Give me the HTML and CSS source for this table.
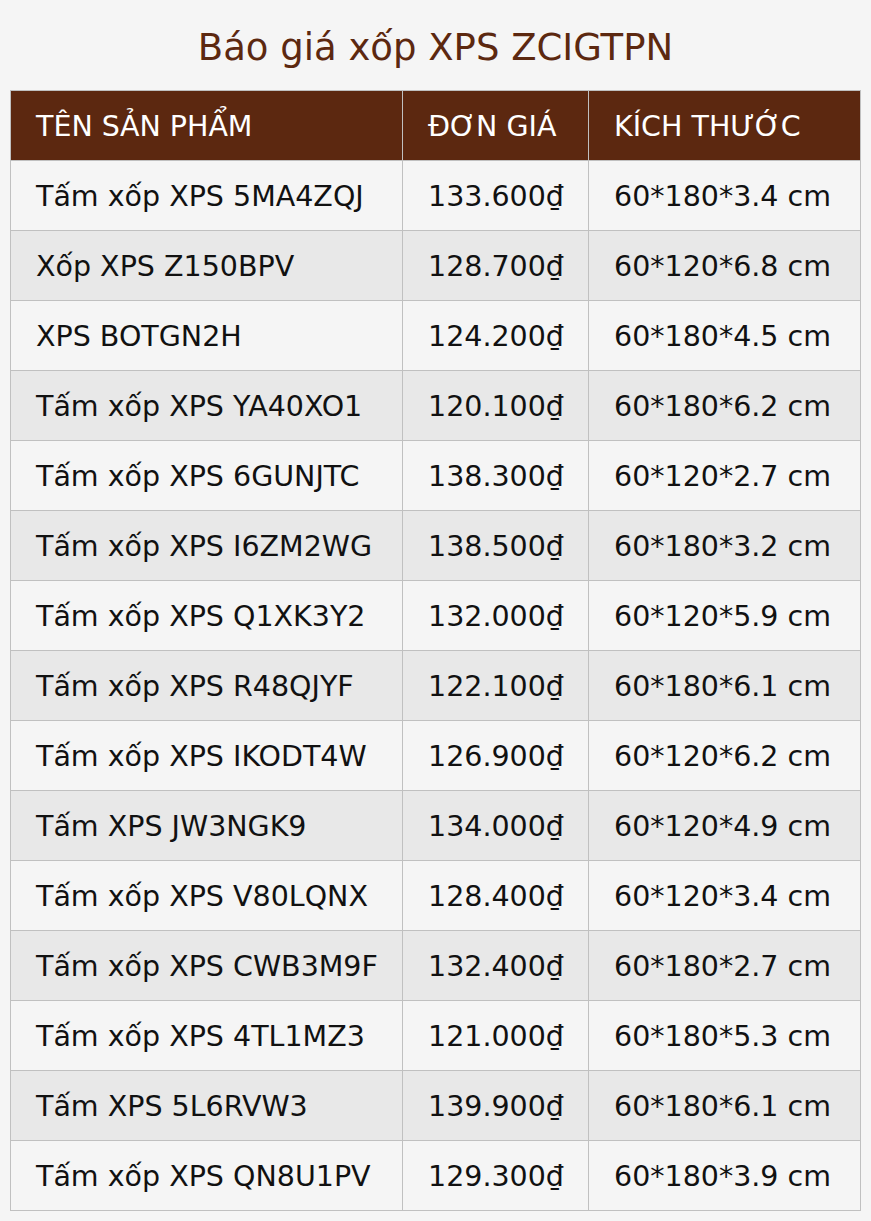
FILE: index.html
```html
<!DOCTYPE html>
<html lang="vi">
<head>
<meta charset="utf-8">
<title>Báo giá xốp XPS ZCIGTPN</title>
<link rel="stylesheet" href="styles.css">
</head>
<body>
<h1 class="title">Báo giá xốp XPS ZCIGTPN</h1>
<table class="price-table">
  <colgroup>
    <col class="c-name">
    <col class="c-price">
    <col class="c-size">
  </colgroup>
  <thead>
    <tr><th>TÊN SẢN PHẨM</th><th>ĐƠN GIÁ</th><th>KÍCH THƯỚC</th></tr>
  </thead>
  <tbody>
    <tr><td>Tấm xốp XPS 5MA4ZQJ</td><td>133.600₫</td><td>60*180*3.4 cm</td></tr>
    <tr><td>Xốp XPS Z150BPV</td><td>128.700₫</td><td>60*120*6.8 cm</td></tr>
    <tr><td>XPS BOTGN2H</td><td>124.200₫</td><td>60*180*4.5 cm</td></tr>
    <tr><td>Tấm xốp XPS YA40XO1</td><td>120.100₫</td><td>60*180*6.2 cm</td></tr>
    <tr><td>Tấm xốp XPS 6GUNJTC</td><td>138.300₫</td><td>60*120*2.7 cm</td></tr>
    <tr><td>Tấm xốp XPS I6ZM2WG</td><td>138.500₫</td><td>60*180*3.2 cm</td></tr>
    <tr><td>Tấm xốp XPS Q1XK3Y2</td><td>132.000₫</td><td>60*120*5.9 cm</td></tr>
    <tr><td>Tấm xốp XPS R48QJYF</td><td>122.100₫</td><td>60*180*6.1 cm</td></tr>
    <tr><td>Tấm xốp XPS IKODT4W</td><td>126.900₫</td><td>60*120*6.2 cm</td></tr>
    <tr><td>Tấm XPS JW3NGK9</td><td>134.000₫</td><td>60*120*4.9 cm</td></tr>
    <tr><td>Tấm xốp XPS V80LQNX</td><td>128.400₫</td><td>60*120*3.4 cm</td></tr>
    <tr><td>Tấm xốp XPS CWB3M9F</td><td>132.400₫</td><td>60*180*2.7 cm</td></tr>
    <tr><td>Tấm xốp XPS 4TL1MZ3</td><td>121.000₫</td><td>60*180*5.3 cm</td></tr>
    <tr><td>Tấm XPS 5L6RVW3</td><td>139.900₫</td><td>60*180*6.1 cm</td></tr>
    <tr><td>Tấm xốp XPS QN8U1PV</td><td>129.300₫</td><td>60*180*3.9 cm</td></tr>
  </tbody>
</table>
</body>
</html>
```

FILE: styles.css
```css
html, body {
  margin: 0;
  padding: 0;
  background: #f5f5f5;
  font-family: "DejaVu Sans", Verdana, sans-serif;
}
body {
  padding: 0 10px 10px 10px;
}
.title {
  margin: 0;
  padding: 26px 0 20px 0;
  text-align: center;
  font-size: 37px;
  font-weight: normal;
  line-height: 44px;
  color: #5c2810;
}
.price-table {
  width: 851px;
  table-layout: fixed;
  border-collapse: collapse;
  font-size: 28.5px;
}
.c-name { width: 392px; }
.c-price { width: 186px; }
.c-size { width: 272px; }
.price-table th,
.price-table td {
  border: 1px solid #c0c0c0;
  padding: 3px 0 0 25px;
  height: 66px;
  text-align: left;
  vertical-align: middle;
  line-height: 34px;
  white-space: nowrap;
}
.price-table th {
  background: #5c2810;
  color: #ffffff;
  font-weight: normal;
}
.price-table td {
  color: #111111;
}
.price-table tbody tr:nth-child(odd) td { background: #f5f5f5; }
.price-table tbody tr:nth-child(even) td { background: #e8e8e8; }
```
